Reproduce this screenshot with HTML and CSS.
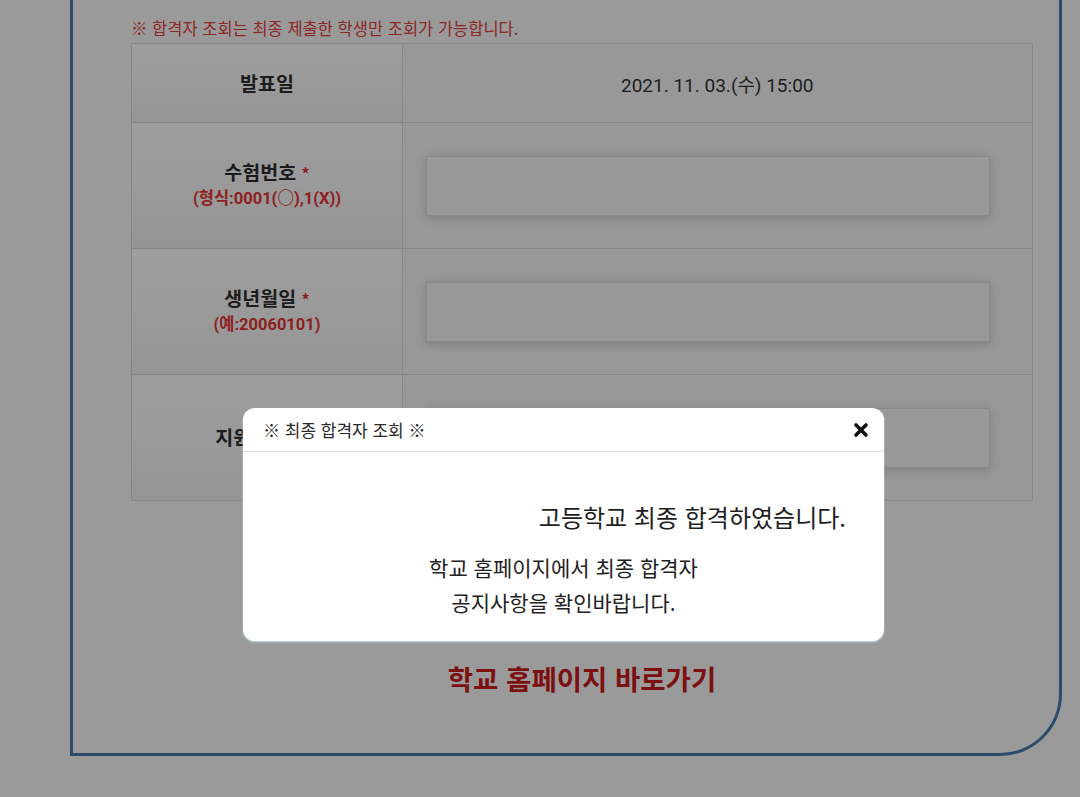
FILE: index.html
```html
<!DOCTYPE html>
<html lang="ko">
<head>
<meta charset="utf-8">
<link rel="stylesheet" href="styles.css">
</head>
<body>
<div class="frame">
  <p class="notice">※ 합격자 조회는 최종 제출한 학생만 조회가 가능합니다.</p>
  <table class="form">
    <tr class="row-date">
      <th><span class="lbl">발표일</span></th>
      <td class="date">2021. 11. 03.(수) 15:00</td>
    </tr>
    <tr>
      <th><span class="lbl">수험번호 <span class="req">*</span></span><span class="hint">(형식:0001(○),1(X))</span></th>
      <td><div class="inp"></div></td>
    </tr>
    <tr>
      <th><span class="lbl">생년월일 <span class="req">*</span></span><span class="hint">(예:20060101)</span></th>
      <td><div class="inp"></div></td>
    </tr>
    <tr>
      <th><span class="lbl">지원학교명 <span class="req">*</span></span></th>
      <td><div class="inp"></div></td>
    </tr>
  </table>
  <a class="home" href="#">학교 홈페이지 바로가기</a>
</div>

<div class="modal">
  <div class="modal-head">
    <span class="modal-title">※ 최종 합격자 조회 ※</span>
    <svg class="close" width="16" height="16" viewBox="0 0 16 16"><path d="M3 3 L13 13 M13 3 L3 13" stroke="#111" stroke-width="3.6" stroke-linecap="round"/></svg>
  </div>
  <div class="modal-body">
    <p class="result">고등학교 최종 합격하였습니다.</p>
    <p class="info">학교 홈페이지에서 최종 합격자<br>공지사항을 확인바랍니다.</p>
  </div>
</div>
</body>
</html>
```

FILE: styles.css
```css
html, body {
  margin: 0;
  padding: 0;
}
body {
  background: #9a9a9a;
  font-family: Roboto, "Noto Sans CJK KR", "Noto Sans", sans-serif;
  width: 1080px;
  height: 797px;
  overflow: hidden;
  position: relative;
}
.frame {
  box-sizing: border-box;
  margin-left: 70px;
  width: 992px;
  height: 756px;
  border: 3px solid #2b4c6c;
  border-top: none;
  border-bottom-right-radius: 62px;
  padding: 17px 26px 0 58px;
  display: flex;
  flex-direction: column;
}
.notice {
  margin: 0 0 4px;
  font-size: 16.5px;
  line-height: 22px;
  color: #8e2626;
  font-family: "Noto Sans CJK KR", sans-serif;
}
.form {
  width: 902px;
  border-collapse: collapse;
  border: 1px solid #878787;
}
.form th, .form td {
  border: 1px solid #878787;
  padding: 0;
}
.form th {
  width: 270px;
  height: 125px;
  background: linear-gradient(#9e9e9e, #959595);
  font-family: "Noto Sans CJK KR", sans-serif;
  text-align: center;
  vertical-align: middle;
}
.form .row-date th, .form .row-date td {
  height: 78px;
}
.lbl {
  display: block;
  font-size: 19.5px;
  font-weight: 700;
  color: #1c1c1c;
  line-height: 26px;
}
.req {
  color: #8e2020;
  font-size: 16px;
}
.hint {
  display: block;
  font-size: 16.5px;
  font-weight: 700;
  color: #8e2020;
  line-height: 26px;
  font-family: Roboto, "Noto Sans CJK KR", sans-serif;
}
.form td {
  background: #989898;
}
.date {
  padding-left: 218px !important;
  font-size: 19px;
  color: #1e1e1e;
}
.inp {
  margin-left: 23px;
  width: 562px;
  height: 58px;
  border: 1px solid #888;
  background: #989898;
  box-shadow: 0 2px 10px rgba(0, 0, 0, 0.18);
}
.home {
  margin-top: 158px;
  align-self: center;
  font-family: "Noto Sans CJK KR", sans-serif;
  font-size: 27.5px;
  font-weight: 700;
  line-height: 38px;
  color: #7c1010;
  text-decoration: none;
}
.modal {
  position: absolute;
  left: 243px;
  top: 408px;
  width: 641px;
  height: 233px;
  background: #fff;
  border-radius: 12px;
  box-shadow: 0 1px 2px rgba(200, 230, 235, 0.9);
  overflow: hidden;
  font-family: "Noto Sans CJK KR", sans-serif;
}
.modal-head {
  height: 43px;
  border-bottom: 1px solid #dcdcdc;
  display: flex;
  align-items: center;
  justify-content: space-between;
  padding: 0 15px 0 20px;
}
.modal-title {
  font-size: 17px;
  color: #2a2a2a;
}
.close {
  display: block;
}
.modal-body {
  padding-top: 48px;
}
.result {
  margin: 0;
  text-align: right;
  padding-right: 38px;
  font-size: 24px;
  line-height: 34px;
  color: #1e1e1e;
}
.info {
  margin: 16px 0 0;
  text-align: center;
  font-size: 21px;
  line-height: 35px;
  color: #222;
}
```
